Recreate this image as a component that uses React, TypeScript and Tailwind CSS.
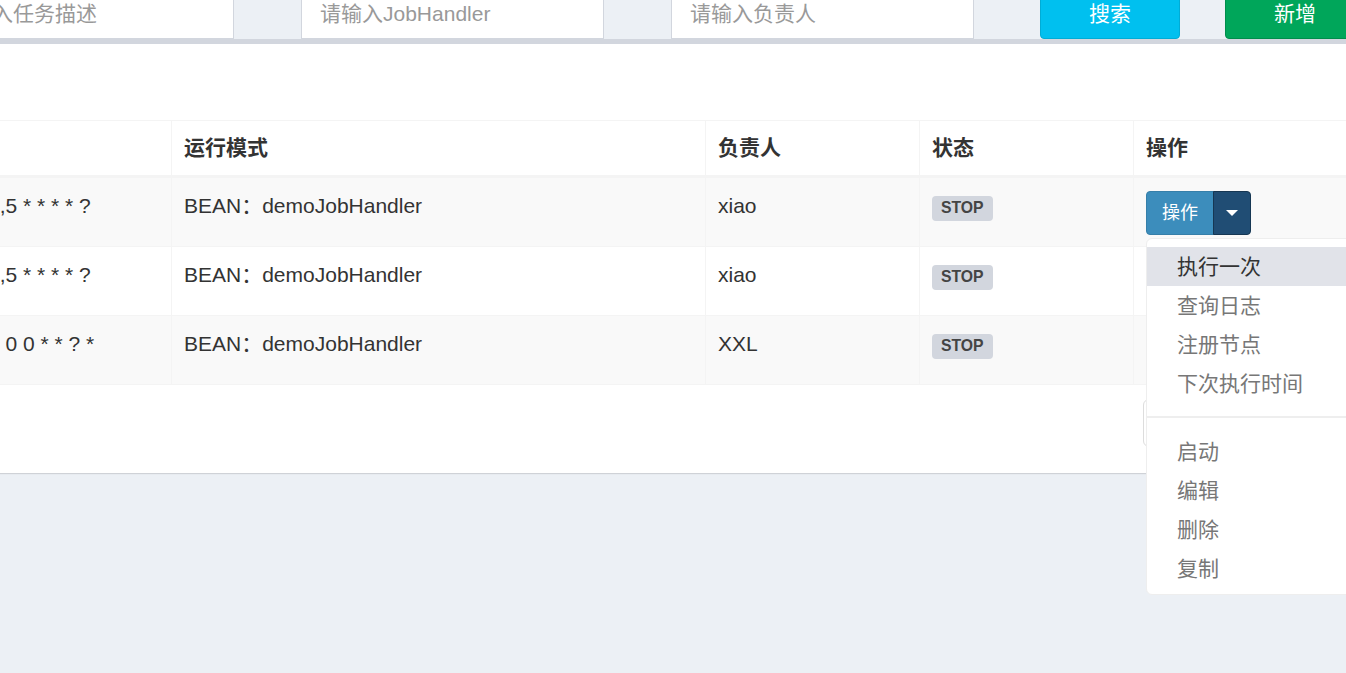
import React from "react";

type Row = { cron: string; mode: string; owner: string; stripe: boolean; open?: boolean };

const rows: Row[] = [
  { cron: "0,5 * * * * ?", mode: "BEAN：demoJobHandler", owner: "xiao", stripe: true, open: true },
  { cron: "0,5 * * * * ?", mode: "BEAN：demoJobHandler", owner: "xiao", stripe: false },
  { cron: "0 0 0 * * ? *", mode: "BEAN：demoJobHandler", owner: "XXL", stripe: true },
];

const menuTop = ["执行一次", "查询日志", "注册节点", "下次执行时间"];
const menuBottom = ["启动", "编辑", "删除", "复制"];

function ActionMenu() {
  return (
    <div className="absolute left-0 top-full z-10 mt-[3px] w-[240px] rounded-[6px] border border-[#eeeeee] bg-white pt-[8px] pb-[6px]">
      {menuTop.map((t, i) => (
        <div
          key={t}
          className={`h-[39px] whitespace-nowrap pl-[30px] leading-[39px] ${
            i === 0 ? "bg-[#e1e3e9] text-[#333333]" : "text-[#777777]"
          }`}
        >
          {t}
        </div>
      ))}
      <div className="mt-[13px] mb-[14px] h-[2px] bg-[#eeeeee]" />
      {menuBottom.map((t) => (
        <div key={t} className="h-[39px] whitespace-nowrap pl-[30px] leading-[39px] text-[#777777]">
          {t}
        </div>
      ))}
    </div>
  );
}

function ActionButton({ open }: { open?: boolean }) {
  return (
    <div className="relative inline-flex h-[44px] align-top">
      <button className="h-[44px] rounded-l-[4px] border border-[#367fa9] bg-[#3c8dbc] px-[15px] text-[18px] leading-[42px] text-white">
        操作
      </button>
      <button className="-ml-px flex h-[44px] w-[38px] items-center justify-center rounded-r-[4px] border border-[#163753] bg-[#204d74]">
        <span className="block h-0 w-0 border-x-[6px] border-t-[6px] border-x-transparent border-t-white" />
      </button>
      {open && <ActionMenu />}
    </div>
  );
}

const grid = "grid grid-cols-[195px_534px_214px_214px_300px]";
const head = "border-l border-[#f4f4f4] p-[12px] leading-[30px] whitespace-nowrap";
const cell = "border-l border-[#f4f4f4] px-[12px] pt-[13px] pb-[11px] leading-[30px] whitespace-nowrap";

export default function App() {
  return (
    <div className="h-[673px] w-full overflow-hidden bg-[#ecf0f5] font-['Liberation_Sans','Noto_Sans_CJK_SC',sans-serif] text-[21px] text-[#333333]">
      {/* search bar */}
      <div className="-mt-[12px] ml-[-69px] flex h-[51px]">
        <input
          className="h-[51px] w-[303px] shrink-0 border border-[#d2d6de] bg-white px-[18px] text-[21px] outline-none placeholder:text-[#999999]"
          placeholder="请输入任务描述"
        />
        <div className="w-[67px] shrink-0" />
        <input
          className="h-[51px] w-[303px] shrink-0 border border-[#d2d6de] bg-white px-[18px] text-[21px] outline-none placeholder:text-[#999999]"
          placeholder="请输入JobHandler"
        />
        <div className="w-[67px] shrink-0" />
        <input
          className="h-[51px] w-[303px] shrink-0 border border-[#d2d6de] bg-white px-[18px] text-[21px] outline-none placeholder:text-[#999999]"
          placeholder="请输入负责人"
        />
        <div className="w-[66px] shrink-0" />
        <button className="h-[51px] w-[140px] shrink-0 rounded-[4px] border border-[#00acd6] bg-[#00c0ef] text-[21px] text-white">
          搜索
        </button>
        <div className="w-[45px] shrink-0" />
        <button className="h-[51px] w-[140px] shrink-0 rounded-[4px] border border-[#008d4c] bg-[#00a65a] text-[21px] text-white">
          新增
        </button>
      </div>

      {/* box */}
      <div className="border-t-[5px] border-[#d2d6de] bg-white pt-[76px] shadow-[0_1px_1px_rgba(0,0,0,0.12)]">
        <div className="ml-[-24px] w-[1457px]">
          {/* header */}
          <div className={`${grid} border-t border-b-[3px] border-[#f4f4f4] font-bold`}>
            <div className={`${head} border-l-0`} />
            <div className={head}>运行模式</div>
            <div className={head}>负责人</div>
            <div className={head}>状态</div>
            <div className={head}>操作</div>
          </div>
          {rows.map((r, i) => (
            <div
              key={i}
              className={`${grid} border-b border-[#f4f4f4] ${r.stripe ? "bg-[#f9f9f9]" : "bg-white"}`}
            >
              <div className={`${cell} border-l-0`}>{r.cron}</div>
              <div className={cell}>{r.mode}</div>
              <div className={cell}>{r.owner}</div>
              <div className={cell}>
                <span className="mt-[5px] inline-block rounded-[4px] bg-[#d2d6de] px-[9px] pt-[4px] pb-[5px] align-top text-[15.75px] font-bold leading-none text-[#444444]">
                  STOP
                </span>
              </div>
              <div className={cell}>
                {r.open ? <ActionButton open /> : <div className="h-[44px]" />}
              </div>
            </div>
          ))}
        </div>
        {/* pagination */}
        <div className="flex pt-[14px] pb-[26px] pl-[1143px]">
          <div className="h-[48px] w-[60px] shrink-0 rounded-l-[6px] border border-[#dddddd]" />
        </div>
      </div>
    </div>
  );
}
